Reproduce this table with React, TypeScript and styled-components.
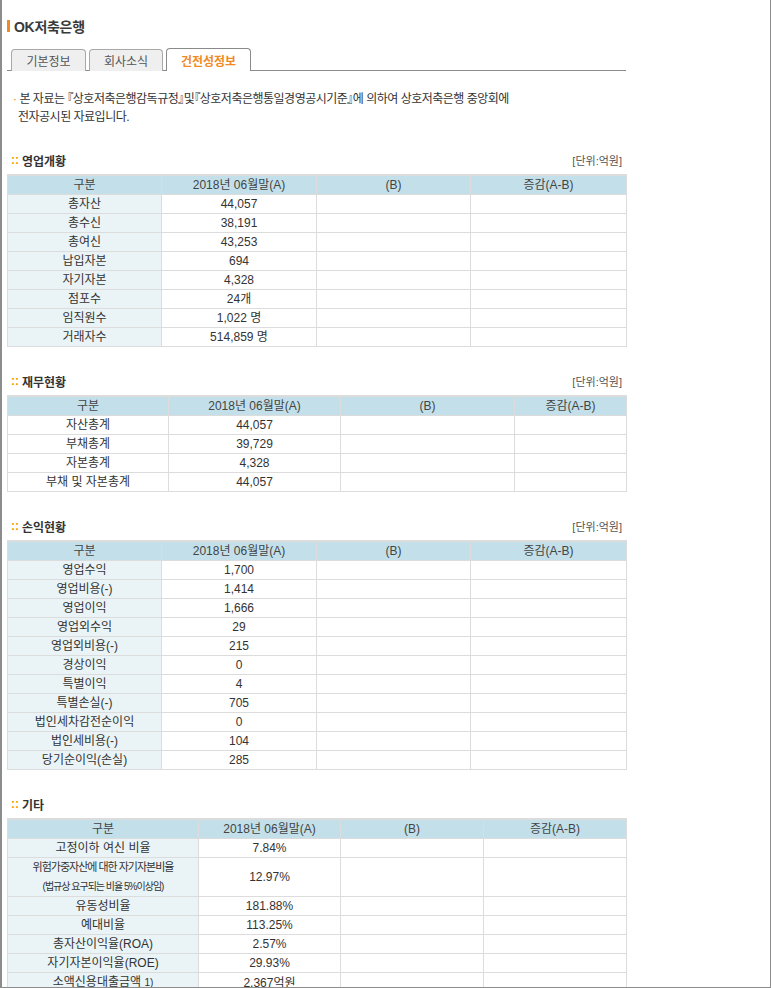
import React from "react";
import styled, { createGlobalStyle } from "styled-components";

const Global = createGlobalStyle`
  html, body { margin: 0; padding: 0; background: #fff; }
  body { font-family: "Liberation Sans", "Noto Sans CJK KR", sans-serif; color: #333; }
  * { box-sizing: border-box; }
`;

const Frame = styled.div`
  width: 771px;
  height: 988px;
  overflow: hidden;
  border-left: 2px solid #8c8c8c;
  border-right: 1px solid #8c8c8c;
  border-bottom: 1px solid #8c8c8c;
  padding-left: 5px;
`;

const Content = styled.div`
  width: 619px;
`;

const PageTitle = styled.h1`
  margin: 19px 0 0 0;
  height: 14px;
  display: flex;
  align-items: center;
  gap: 4px;
  font-size: 14px;
  font-weight: bold;
  color: #3a3a3a;
  letter-spacing: -0.3px;
  &::before {
    content: "";
    width: 3px;
    height: 12px;
    background: #f08a24;
  }
`;

const TabBar = styled.div`
  display: flex;
  gap: 3px;
  margin-top: 15px;
  padding-left: 4px;
  height: 23px;
  border-bottom: 1px solid #8a8a8a;
`;

const Tab = styled.div<{ $active?: boolean; $w: number }>`
  width: ${(p) => p.$w}px;
  height: ${(p) => (p.$active ? 23 : 22)}px;
  margin-top: ${(p) => (p.$active ? 0 : 1)}px;
  border: 1px solid ${(p) => (p.$active ? "#8a8a8a" : "#a8a8a8")};
  border-bottom: none;
  border-radius: 4px 4px 0 0;
  background: ${(p) => (p.$active ? "#fff" : "#efefef")};
  color: ${(p) => (p.$active ? "#f08a24" : "#555")};
  font-weight: ${(p) => (p.$active ? "bold" : "normal")};
  font-size: 12px;
  display: flex;
  align-items: center;
  justify-content: center;
  position: relative;
  z-index: 1;
`;

const Notice = styled.p`
  margin: 19px 0 0 0;
  padding-left: 11px;
  text-indent: -5px;
  font-size: 12px;
  line-height: 18px;
  color: #333;
  letter-spacing: -0.5px;
  font-feature-settings: "palt";
`;

const Dot = styled.span`
  color: #f08a24;
  margin-right: 3px;
`;

const Section = styled.section`
  margin-top: 26px;
`;

const SectionHead = styled.div`
  display: flex;
  justify-content: space-between;
  align-items: center;
  height: 16px;
  margin-bottom: 6px;
`;

const SectionTitle = styled.h2`
  margin: 0;
  padding-left: 4px;
  font-size: 12px;
  font-weight: bold;
  color: #333;
  display: flex;
  align-items: center;
  gap: 3px;
`;

const Colons = styled.span`
  color: #f39800;
  font-weight: bold;
`;

const Unit = styled.span`
  font-size: 11px;
  color: #555;
  padding-right: 4px;
`;

const Table = styled.table`
  width: 619px;
  border-collapse: collapse;
  table-layout: fixed;
  border-top: 2px solid #dcdcdc;
  font-size: 12px;
  color: #333;
`;

const Th = styled.th`
  background: #c3e0ea;
  font-weight: normal;
  color: #444;
  line-height: 18px;
  padding: 0;
  border: 1px solid #dcdcdc;
  border-top: none;
  text-align: center;
`;

const Td = styled.td<{ $label?: boolean; $tinted?: boolean }>`
  padding: 0;
  line-height: 18px;
  text-align: center;
  border: 1px solid #dcdcdc;
  background: ${(p) => (p.$label && p.$tinted ? "#eaf4f7" : "#fff")};
`;

const SmallLine = styled.div<{ $size: number }>`
  font-size: ${(p) => p.$size}px;
  letter-spacing: -1px;
  line-height: 19px;
`;

const Note = styled.span`
  font-size: 10px;
`;

type Row = { label: React.ReactNode; value: string };

const DataTable: React.FC<{
  widths: number[];
  rows: Row[];
  tinted: boolean;
}> = ({ widths, rows, tinted }) => (
  <Table>
    <colgroup>
      {widths.map((w, i) => (
        <col key={i} style={{ width: w }} />
      ))}
    </colgroup>
    <thead>
      <tr>
        <Th>구분</Th>
        <Th>2018년 06월말(A)</Th>
        <Th>(B)</Th>
        <Th>증감(A-B)</Th>
      </tr>
    </thead>
    <tbody>
      {rows.map((r, i) => (
        <tr key={i}>
          <Td $label $tinted={tinted}>{r.label}</Td>
          <Td>{r.value}</Td>
          <Td />
          <Td />
        </tr>
      ))}
    </tbody>
  </Table>
);

const rows1: Row[] = [
  { label: "총자산", value: "44,057" },
  { label: "총수신", value: "38,191" },
  { label: "총여신", value: "43,253" },
  { label: "납입자본", value: "694" },
  { label: "자기자본", value: "4,328" },
  { label: "점포수", value: "24개" },
  { label: "임직원수", value: "1,022 명" },
  { label: "거래자수", value: "514,859 명" },
];

const rows2: Row[] = [
  { label: "자산총계", value: "44,057" },
  { label: "부채총계", value: "39,729" },
  { label: "자본총계", value: "4,328" },
  { label: "부채 및 자본총계", value: "44,057" },
];

const rows3: Row[] = [
  { label: "영업수익", value: "1,700" },
  { label: "영업비용(-)", value: "1,414" },
  { label: "영업이익", value: "1,666" },
  { label: "영업외수익", value: "29" },
  { label: "영업외비용(-)", value: "215" },
  { label: "경상이익", value: "0" },
  { label: "특별이익", value: "4" },
  { label: "특별손실(-)", value: "705" },
  { label: "법인세차감전순이익", value: "0" },
  { label: "법인세비용(-)", value: "104" },
  { label: "당기순이익(손실)", value: "285" },
];

const rows4: Row[] = [
  { label: "고정이하 여신 비율", value: "7.84%" },
  {
    label: (
      <>
        <SmallLine $size={11}>위험가중자산에 대한 자기자본비율</SmallLine>
        <SmallLine $size={10}>(법규상 요구되는 비율 5%이상임)</SmallLine>
      </>
    ),
    value: "12.97%",
  },
  { label: "유동성비율", value: "181.88%" },
  { label: "예대비율", value: "113.25%" },
  { label: "총자산이익율(ROA)", value: "2.57%" },
  { label: "자기자본이익율(ROE)", value: "29.93%" },
  {
    label: (
      <>
        소액신용대출금액 <Note>1)</Note>
      </>
    ),
    value: "2,367억원",
  },
];

export default function App() {
  return (
    <Frame>
      <Global />
      <Content>
        <PageTitle>OK저축은행</PageTitle>
        <TabBar>
          <Tab $w={75}>기본정보</Tab>
          <Tab $w={74}>회사소식</Tab>
          <Tab $w={85} $active>
            건전성정보
          </Tab>
        </TabBar>
        <Notice>
          <Dot>·</Dot>본 자료는 『상호저축은행감독규정』및『상호저축은행통일경영공시기준』에 의하여 상호저축은행 중앙회에
          <br />
          전자공시된 자료입니다.
        </Notice>

        <Section>
          <SectionHead>
            <SectionTitle>
              <Colons>::</Colons>영업개황
            </SectionTitle>
            <Unit>[단위:억원]</Unit>
          </SectionHead>
          <DataTable widths={[154, 155, 154, 156]} rows={rows1} tinted />
        </Section>

        <Section>
          <SectionHead>
            <SectionTitle>
              <Colons>::</Colons>재무현황
            </SectionTitle>
            <Unit>[단위:억원]</Unit>
          </SectionHead>
          <DataTable widths={[161, 172, 174, 112]} rows={rows2} tinted={false} />
        </Section>

        <Section>
          <SectionHead>
            <SectionTitle>
              <Colons>::</Colons>손익현황
            </SectionTitle>
            <Unit>[단위:억원]</Unit>
          </SectionHead>
          <DataTable widths={[154, 155, 154, 156]} rows={rows3} tinted />
        </Section>

        <Section>
          <SectionHead>
            <SectionTitle>
              <Colons>::</Colons>기타
            </SectionTitle>
          </SectionHead>
          <DataTable widths={[191, 142, 143, 143]} rows={rows4} tinted />
        </Section>
      </Content>
    </Frame>
  );
}
